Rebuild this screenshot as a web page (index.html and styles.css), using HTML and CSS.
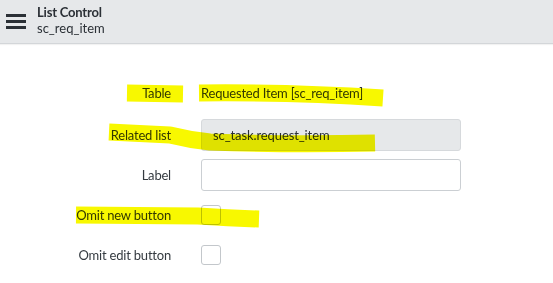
FILE: index.html
```html
<!DOCTYPE html>
<html lang="en">
<head>
    <meta charset="UTF-8">
    <title>List Control</title>
    <link rel="stylesheet" href="styles.css">
</head>
<body>
<div class="header">
    <div class="menu-icon">
        <span></span><span></span><span></span>
    </div>
    <div class="header-titles">
        <div class="title">List Control</div>
        <div class="subtitle">sc_req_item</div>
    </div>
</div>
<div class="form">
    <div class="row row-first">
        <div class="label">Table</div>
        <div class="value">Requested Item [sc_req_item]</div>
    </div>
    <div class="row">
        <div class="label">Related list</div>
        <div class="input readonly">sc_task.request_item</div>
    </div>
    <div class="row">
        <div class="label">Label</div>
        <div class="input"></div>
    </div>
    <div class="row">
        <div class="label">Omit new button</div>
        <div class="checkbox"></div>
    </div>
    <div class="row">
        <div class="label">Omit edit button</div>
        <div class="checkbox"></div>
    </div>
</div>
<svg class="marker" width="553" height="283" viewBox="0 0 553 283">
    <path d="M127 93 L183 94"/>
    <path d="M199 93 Q290 92 383 98"/>
    <path d="M109 132 L170 135 Q190 140 210 142 Q290 145 375 143"/>
    <path d="M76 215 L198 216 Q230 218 259 219"/>
</svg>
</body>
</html>
```
FILE: styles.css
```css
body {
    margin: 0;
    font-family: "Lato", "Open Sans", sans-serif;
    color: #343a40;
    background: #fff;
    width: 553px;
    height: 283px;
    overflow: hidden;
    position: relative;
}

.header {
    height: 43px;
    background-color: #e6e8ea;
    border-bottom: 1px solid #d3d6d9;
    display: flex;
    align-items: center;
    box-shadow: 0 1px 1px rgba(0, 0, 0, 0.05);
}

.menu-icon {
    width: 20px;
    margin-left: 6px;
    margin-right: 11px;
    display: flex;
    flex-direction: column;
    gap: 3px;
}

.menu-icon span {
    display: block;
    height: 3px;
    background-color: #2b3036;
}

.header-titles {
    line-height: 16px;
    margin-top: -4px;
}

.title {
    font-size: 13px;
    font-weight: bold;
    color: #2b3036;
    letter-spacing: -0.2px;
}

.subtitle {
    font-size: 13px;
    color: #2b3036;
}

.form {
    padding-top: 33px;
}

.row {
    display: flex;
    align-items: center;
    height: 32px;
    margin-bottom: 8px;
}

.row-first {
    margin-bottom: 10px;
}

.label {
    width: 171px;
    text-align: right;
    font-size: 13px;
    letter-spacing: -0.2px;
    margin-right: 30px;
}

.value {
    font-size: 13px;
    letter-spacing: -0.2px;
}

.input {
    box-sizing: border-box;
    width: 260px;
    height: 32px;
    border: 1px solid #cbcfd3;
    border-radius: 3px;
    font-size: 13px;
    letter-spacing: -0.1px;
    padding: 0 11px;
    display: flex;
    align-items: center;
    color: #2b3036;
}

.input.readonly {
    background-color: #e6e8ea;
    border-color: #d6d9dc;
}

.checkbox {
    box-sizing: border-box;
    width: 20px;
    height: 20px;
    border: 1px solid #c3c7cb;
    border-radius: 3px;
}

.marker {
    position: absolute;
    left: 0;
    top: 0;
    pointer-events: none;
    mix-blend-mode: multiply;
}

.marker path {
    fill: none;
    stroke: #f8f800;
    stroke-width: 17;
    stroke-linecap: butt;
    stroke-linejoin: round;
}
```
